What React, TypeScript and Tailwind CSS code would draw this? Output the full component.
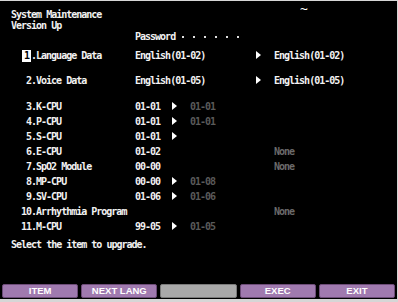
const rowsA = [
  { n: "1", label: "Language Data", cur: "English(01-02)", next: "English(01-02)", sel: true },
  { n: "2", label: "Voice Data", cur: "English(01-05)", next: "English(01-05)" },
];

const rowsB = [
  { n: "3", label: "K-CPU", cur: "01-01", next: "01-01" },
  { n: "4", label: "P-CPU", cur: "01-01", next: "01-01" },
  { n: "5", label: "S-CPU", cur: "01-01", next: "" },
  { n: "6", label: "E-CPU", cur: "01-02", none: true },
  { n: "7", label: "SpO2 Module", cur: "00-00", none: true },
  { n: "8", label: "MP-CPU", cur: "00-00", next: "01-08" },
  { n: "9", label: "SV-CPU", cur: "01-06", next: "01-06" },
  { n: "10", label: "Arrhythmia Program", cur: "", none: true },
  { n: "11", label: "M-CPU", cur: "99-05", next: "01-05" },
];

const buttons = ["ITEM", "NEXT LANG", "", "EXEC", "EXIT"];

const Arrow = () => (
  <span className="inline-block h-0 w-0 border-y-[4px] border-l-[5px] border-y-transparent border-l-white" />
);

const Num = ({ n, sel }: { n: string; sel?: boolean }) => (
  <span className="inline-flex w-[20px] justify-end">
    <span className={sel ? "bg-white px-[2px] py-[1px] text-black" : ""}>{n}</span>
  </span>
);

export default function App() {
  return (
    <div className="h-[302px] w-[398px] bg-[#d6d6d6] pt-[1px] pr-[1px] pb-[3px]">
      <div
        className="relative flex h-full w-full flex-col bg-black text-[10px] font-bold leading-none tracking-[-1px] text-[#f2f2f2]"
        style={{ fontFamily: '"DejaVu Sans Mono", "Liberation Mono", monospace' }}
      >
        {/* header */}
        <div className="absolute left-[300px] top-[1px] text-[13px] leading-none font-normal text-white">~</div>
        <div className="pl-[11px] pt-[9px]">
          <p className="h-[11px]">System Maintenance</p>
          <p className="h-[11px]">Version Up</p>
        </div>
        <div className="flex items-center pl-[135px]">
          <span className="w-[47px]">Password</span>
          <span className="flex gap-[9px]">
            {Array.from({ length: 6 }).map((_, i) => (
              <span key={i} className="h-[2px] w-[2px] bg-[#e0e0e0]" />
            ))}
          </span>
        </div>

        {/* language / voice */}
        <div className="mt-[8px] flex flex-col gap-[13px]">
          {rowsA.map((r) => (
            <div key={r.n} className="flex h-[12px] items-center pl-[11px]">
              <span className="flex w-[124px] items-center">
                <Num n={r.n} sel={r.sel} />
                <span>.{r.label}</span>
              </span>
              <span className="w-[121px]">{r.cur}</span>
              <span className="w-[18px]"><Arrow /></span>
              <span>{r.next}</span>
            </div>
          ))}
        </div>

        {/* modules */}
        <div className="mt-[14px] flex flex-col gap-[3px]">
          {rowsB.map((r) => (
            <div key={r.n} className="flex h-[12px] items-center pl-[11px]">
              <span className="flex w-[124px] items-center">
                <Num n={r.n} />
                <span>.{r.label}</span>
              </span>
              <span className="w-[37px]">{r.cur}</span>
              {r.none ? (
                <span className="pl-[102px] text-[#6a6a6a]">None</span>
              ) : (
                <>
                  <span className="w-[18px]"><Arrow /></span>
                  <span className="text-[#5a5a5a]">{r.next}</span>
                </>
              )}
            </div>
          ))}
        </div>

        <p className="pl-[11px] pt-[7px]">Select the item to upgrade.</p>

        {/* soft keys */}
        <div
          className="mt-auto flex gap-[3px] px-[2px] pb-[1px] tracking-normal"
          style={{ fontFamily: '"Liberation Sans", Arial, sans-serif' }}
        >
          {buttons.map((b, i) => (
            <div
              key={i}
              className={`flex h-[14px] flex-1 items-center justify-center rounded-[2px] border text-[9.5px] font-bold text-white ${
                b ? "border-[#6d4c78] bg-[#a07aaf]" : "border-[#7a7a7a] bg-[#a9a9a9]"
              }`}
            >
              {b}
            </div>
          ))}
        </div>
      </div>
    </div>
  );
}
